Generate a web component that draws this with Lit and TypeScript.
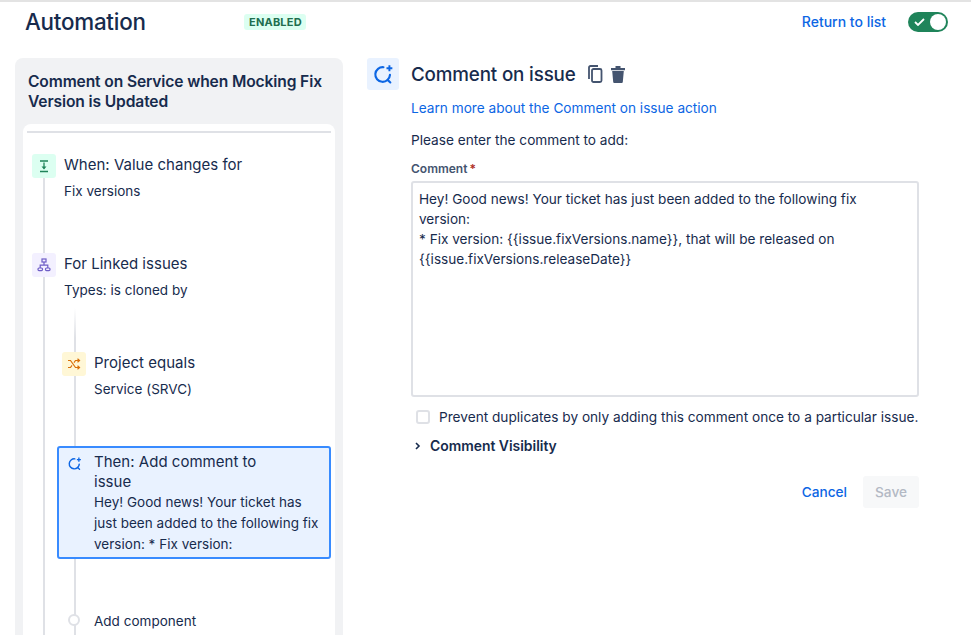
import { LitElement, html, css } from "lit";
import { customElement } from "lit/decorators.js";

const commentIcon = (size: number) => html`<svg width=${size} height=${size} viewBox="0 0 24 24" fill="none" stroke="#0c66e4" stroke-linecap="round">
  <path d="M12.5 4.6A8 8 0 1 0 19.6 13" stroke-width="2.3"/>
  <path d="M17 18.4l3 2.8" stroke-width="2.3"/>
  <path d="M19 2.5v6.5M15.8 5.8h6.4" stroke-width="2.1" stroke-linecap="butt"/>
</svg>`;

@customElement("app-root")
export class AppRoot extends LitElement {
  static styles = css`
    :host {
      display: flex;
      flex-direction: column;
      width: 971px;
      height: 635px;
      overflow: hidden;
      background: #fff;
      color: #172b4d;
      font-family: Inter, "Liberation Sans", sans-serif;
      font-size: 13.65px;
      line-height: 20px;
      border-top: 2px solid #e3e3e3;
      box-sizing: border-box;
    }
    a { color: #0c66e4; text-decoration: none; }
    .top {
      display: flex;
      align-items: center;
      height: 40px;
      padding: 0 23px 0 25px;
      flex: none;
    }
    .top h1 {
      margin: 0;
      font-size: 22.4px;
      line-height: 28px;
      font-weight: 500;
      letter-spacing: -0.25px;
      width: 219px;
    }
    .badge {
      background: #dcfff1;
      color: #216e4e;
      font-size: 11px;
      line-height: 16px;
      font-weight: 700;
      padding: 0 4px 0 5px;
      border-radius: 3px;
      letter-spacing: 0.2px;
    }
    .return { margin-left: auto; font-weight: 500; font-size: 14px; }
    .toggle {
      margin-left: 22px;
      width: 40px;
      height: 20px;
      border-radius: 10px;
      background: #1f845a;
      display: flex;
      align-items: center;
      justify-content: space-between;
      padding: 0 2px 0 6px;
      box-sizing: border-box;
    }
    .knob { width: 16px; height: 16px; border-radius: 50%; background: #fff; }
    .main { display: flex; flex: 1; min-height: 0; padding-top: 16px; }
    .panel {
      margin-left: 15px;
      width: 328px;
      flex: none;
      background: #f1f2f4;
      border-radius: 8px 8px 0 0;
      padding: 0 8px;
      box-sizing: border-box;
      display: flex;
      flex-direction: column;
    }
    .panel h2 {
      margin: 0;
      padding: 14px 5px 12px;
      font-size: 15.6px;
      line-height: 20px;
      font-weight: 600;
      letter-spacing: -0.12px;
    }
    .canvas {
      flex: 1;
      background: #fff;
      border-radius: 8px 8px 0 0;
      padding: 7px 4px 0;
      position: relative;
      overflow: hidden;
    }
    .rule { height: 2px; background: #dfe1e6; }
    .trunk {
      position: absolute;
      left: 20px;
      top: 54px;
      bottom: 0;
      width: 2px;
      background: #dfe1e6;
    }
    .branch {
      position: absolute;
      left: 51px;
      top: 184px;
      bottom: 0;
      width: 2px;
      background: linear-gradient(#fff, #dfe1e6 30px);
    }
    .node {
      position: relative;
      display: flex;
      gap: 8px;
      margin-left: 5px;
    }
    .node.n1 { margin-top: 21px; }
    .node.n2 { margin-top: 51px; }
    .node.n3 { margin-top: 51px; margin-left: 35px; }
    .node.sel {
      margin-top: 46px;
      margin-left: 30px;
      width: 274px;
      height: 113px;
      box-sizing: border-box;
      background: #e9f2ff;
      border: 2px solid #388bff;
      border-radius: 3px;
      padding: 4px 3px 0;
    }
    .node.add { margin-top: 52px; margin-left: 35px; align-items: center; }
    .ico {
      width: 24px;
      height: 24px;
      border-radius: 3px;
      flex: none;
      display: flex;
      align-items: center;
      justify-content: center;
    }
    .sel .ico { margin-top: -1px; }
    .green { background: #dcfff1; }
    .purple { background: #f3f0ff; }
    .yellow { background: #fff7d6; }
    .dot {
      width: 8px;
      height: 8px;
      margin: 0 6px 2px 6px;
      border: 2px solid #dfe1e6;
      border-radius: 50%;
      background: #fff;
      flex: none;
      box-sizing: content-box;
    }
    .t { font-size: 15px; line-height: 20px; letter-spacing: 0.02px; padding-top: 1px; }
    .s { font-size: 13.5px; line-height: 21px; margin-top: 6px; letter-spacing: 0.02px; }
    .sel .s { margin-top: 0; }
    .sel .t { padding-top: 0; width: 200px; }
    .add-label { font-size: 13.5px; letter-spacing: 0.02px; }
    .detail {
      margin-left: 24px;
      width: 552px;
      flex: none;
      display: flex;
      flex-direction: column;
    }
    .head { display: flex; align-items: center; gap: 12px; height: 32px; margin-bottom: 8px; }
    .head .big { width: 32px; height: 32px; background: #e9f2ff; border-radius: 3px; display: flex; align-items: center; justify-content: center; flex: none; }
    .head h3 { margin: 0; padding-top: 1px; font-size: 18.8px; line-height: 24px; font-weight: 500; letter-spacing: -0.16px; }
    .tools { display: flex; gap: 7px; margin-left: -1px; align-items: center; }
    .body { margin-left: 44px; }
    .detail a.learn { display: block; }
    .intro { margin: 12px 0 0; }
    .lab { display: block; margin-top: 11px; font-size: 12px; line-height: 16px; font-weight: 600; color: #44546f; }
    .lab span { color: #ae2e24; margin-left: 2px; }
    .ta {
      margin-top: 4px;
      height: 216px;
      box-sizing: border-box;
      border: 2px solid #dfe1e6;
      border-radius: 3px;
      padding: 6px;
      font-size: 13.6px;
      line-height: 20px;
    }
    .check { display: flex; align-items: center; gap: 9px; margin: 10px 0 0 5px; white-space: nowrap; }
    .box { width: 10px; height: 10px; border: 2px solid #dfe1e6; border-radius: 3px; flex: none; }
    .vis { display: flex; align-items: center; gap: 9px; margin: 9px 0 0 4px; font-weight: 600; font-size: 13.9px; }
    .actions { display: flex; justify-content: flex-end; align-items: center; gap: 16px; margin-top: 20px; }
    .cancel { font-weight: 500; }
    .save {
      width: 56px;
      height: 32px;
      border-radius: 3px;
      background: #f7f8f9;
      color: #b3b9c4;
      font-weight: 500;
      display: flex;
      align-items: center;
      justify-content: center;
    }
  `;

  render() {
    return html`
      <div class="top">
        <h1>Automation</h1>
        <span class="badge">ENABLED</span>
        <a class="return" href="#">Return to list</a>
        <div class="toggle">
          <svg width="11" height="8" viewBox="0 0 11 8" fill="none"><path d="M1 4l3 3 6-6" stroke="#fff" stroke-width="1.8"/></svg>
          <div class="knob"></div>
        </div>
      </div>
      <div class="main">
        <div class="panel">
          <h2>Comment on Service when Mocking Fix Version is Updated</h2>
          <div class="canvas">
            <div class="rule"></div>
            <div class="trunk"></div>
            <div class="branch"></div>
            <div class="node n1">
              <div class="ico green">
                <svg width="14" height="14" viewBox="0 0 14 14" fill="none" stroke="#1f845a" stroke-width="1.3">
                  <path d="M3 2h8M3 12.5h8M7 3.5v6"/><path d="M4.5 7.5h5L7 10.5z" fill="#1f845a" stroke="none"/>
                </svg>
              </div>
              <div><div class="t">When: Value changes for</div><div class="s">Fix versions</div></div>
            </div>
            <div class="node n2">
              <div class="ico purple">
                <svg width="14" height="14" viewBox="0 0 14 14" fill="none" stroke="#6e5dc6" stroke-width="1.2">
                  <rect x="5" y="1" width="4" height="3"/><rect x="1" y="10" width="4.5" height="2.6" rx="1"/><rect x="8.5" y="10" width="4.5" height="2.6" rx="1"/>
                  <path d="M7 4v3M3.2 10V7.2h7.6V10"/>
                </svg>
              </div>
              <div><div class="t">For Linked issues</div><div class="s">Types: is cloned by</div></div>
            </div>
            <div class="node n3">
              <div class="ico yellow">
                <svg width="14" height="14" viewBox="0 0 14 14" fill="none" stroke="#d97008" stroke-width="1.2">
                  <path d="M1 3.5h2.5l5 7H12M1 10.5h2.5L5 8.4M7 5.6l1.5-2.1H12"/><path d="M10.5 1.8l2 1.7-2 1.7M10.5 8.8l2 1.7-2 1.7"/>
                </svg>
              </div>
              <div><div class="t">Project equals</div><div class="s">Service (SRVC)</div></div>
            </div>
            <div class="node sel">
              <div class="ico">${commentIcon(15)}</div>
              <div>
                <div class="t">Then: Add comment to issue</div>
                <div class="s">Hey! Good news! Your ticket has just been added to the following fix version: * Fix version:</div>
              </div>
            </div>
            <div class="node add">
              <div class="dot"></div>
              <div class="add-label">Add component</div>
            </div>
          </div>
        </div>
        <div class="detail">
          <div class="head">
            <div class="big">${commentIcon(22)}</div>
            <h3>Comment on issue</h3>
            <div class="tools">
              <svg width="16" height="18" viewBox="0 0 16 18" fill="none" stroke="#44546f" stroke-width="1.8">
                <path d="M2 14V2.5A1.5 1.5 0 0 1 3.5 1H11"/><rect x="5" y="4" width="9.5" height="13" rx="1.5"/>
              </svg>
              <svg width="16" height="18" viewBox="0 0 16 18" fill="#44546f">
                <path d="M1 3h14v2.2H1zM5.5 1h5v2h-5zM2.2 6h11.6l-1 11a1 1 0 0 1-1 .9H4.2a1 1 0 0 1-1-.9z"/>
              </svg>
            </div>
          </div>
          <div class="body">
            <a class="learn" href="#">Learn more about the Comment on issue action</a>
            <p class="intro">Please enter the comment to add:</p>
            <label class="lab">Comment<span>*</span></label>
            <div class="ta">Hey! Good news! Your ticket has just been added to the following fix version:<br>* Fix version: {{issue.fixVersions.name}}, that will be released on {{issue.fixVersions.releaseDate}}</div>
            <div class="check"><div class="box"></div>Prevent duplicates by only adding this comment once to a particular issue.</div>
            <div class="vis">
              <svg width="6" height="8" viewBox="0 0 6 8" fill="none" stroke="#172b4d" stroke-width="1.6"><path d="M1 1l3 3-3 3"/></svg>
              Comment Visibility
            </div>
            <div class="actions"><a class="cancel" href="#">Cancel</a><div class="save">Save</div></div>
          </div>
        </div>
      </div>
    `;
  }
}
